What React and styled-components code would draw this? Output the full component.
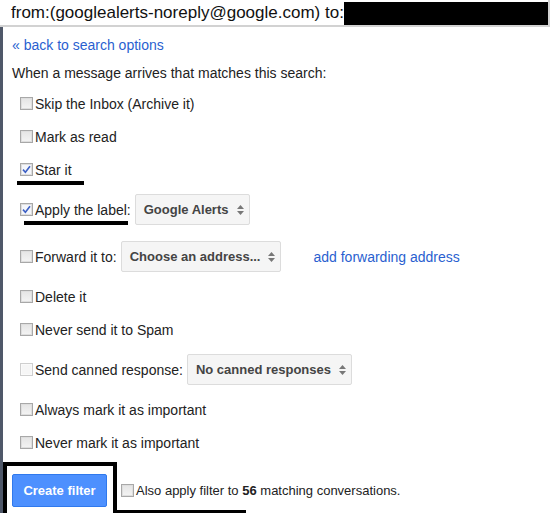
import React from 'react';
import styled, { createGlobalStyle } from 'styled-components';

const GlobalStyle = createGlobalStyle`
  html, body {
    margin: 0;
    padding: 0;
    background: #fff;
  }
  body {
    font-family: "Liberation Sans", Arial, sans-serif;
    color: #222;
  }
`;

const Page = styled.div`
  position: relative;
  width: 550px;
  height: 513px;
  overflow: hidden;
  background: #fff;
`;

const Header = styled.div`
  display: flex;
  align-items: stretch;
  height: 25px;
  box-sizing: content-box;
  border-bottom: 2px solid #d2d2d2;
  border-right: 2px solid #d2d2d2;
  padding-left: 11px;
`;

const Query = styled.div`
  font-size: 17px;
  line-height: 25px;
  color: #111;
  white-space: nowrap;
`;

const Redacted = styled.div`
  flex: 1;
  margin-top: 2px;
  background: #000;
`;

const Body = styled.div`
  border-left: 3px solid #4f5869;
  padding: 4px 0 0 9px;
  height: 486px;
  box-sizing: border-box;
`;

const Line = styled.div`
  display: flex;
  align-items: center;
  height: ${(p) => p.$h || 28}px;
  font-size: ${(p) => p.$size || 14}px;
`;

const Link = styled.a`
  color: #2a5fd0;
  text-decoration: none;
  font-size: 14px;
  margin-left: ${(p) => p.$ml || 0}px;
  cursor: pointer;
`;

const Row = styled.div`
  display: flex;
  align-items: center;
  height: ${(p) => (p.$tall ? 47 : 33)}px;
  padding-left: 8px;
  font-size: 14px;
  white-space: nowrap;
`;

const Box = styled.span`
  display: inline-flex;
  align-items: center;
  justify-content: center;
  width: 13px;
  height: 13px;
  box-sizing: border-box;
  border: 1px solid ${(p) => (p.$disabled ? '#cfcfcf' : '#a8a8a8')};
  background: ${(p) =>
    p.$checked
      ? '#f4f6fb'
      : p.$disabled
      ? '#f6f6f6'
      : 'linear-gradient(#e4e4e4, #f4f4f4)'};
  box-shadow: inset 0 0 0 1px ${(p) => (p.$disabled ? '#fafafa' : '#dedede')};
  margin-right: 2px;
  margin-left: ${(p) => p.$ml || 0}px;
  flex-shrink: 0;
`;

const Select = styled.div`
  position: relative;
  display: inline-flex;
  align-items: center;
  height: 31px;
  box-sizing: border-box;
  margin-left: 4px;
  padding: 0 20px 0 8px;
  border: 1px solid #dcdcdc;
  border-radius: 2px;
  background: #f5f5f5;
  color: #444;
  font-size: 13px;
  font-weight: bold;
`;

const Arrows = styled.svg`
  position: absolute;
  right: 5px;
  top: 10px;
`;

const Footer = styled.div`
  display: flex;
  align-items: center;
  padding-top: 15px;
  font-size: 13px;
  white-space: nowrap;
`;

const Button = styled.button`
  width: 95px;
  height: 33px;
  border: 1px solid #3079ed;
  border-radius: 2px;
  background: #4d90fe;
  color: #fff;
  font-family: "Liberation Sans", Arial, sans-serif;
  font-size: 13px;
  font-weight: bold;
  padding: 0;
  margin-right: 14px;
`;

const Mark = styled.div`
  position: absolute;
  left: ${(p) => p.$x}px;
  top: ${(p) => p.$y}px;
  width: ${(p) => p.$w}px;
  height: ${(p) => p.$h}px;
  background: #000;
`;

const Frame = styled.div`
  position: absolute;
  left: 3px;
  top: 462px;
  width: 114px;
  height: 70px;
  box-sizing: border-box;
  border: 4px solid #000;
`;

const Check = ({ checked, disabled, ml }) => (
  <Box $checked={checked} $disabled={disabled} $ml={ml}>
    {checked && (
      <svg width="9" height="9" viewBox="0 0 9 9">
        <path d="M1 4.6 L3.4 7.2 L8 1.2" fill="none" stroke="#3c5fc4" strokeWidth="1.6" />
      </svg>
    )}
  </Box>
);

const Dropdown = ({ children }) => (
  <Select>
    {children}
    <Arrows width="7" height="10" viewBox="0 0 7 10">
      <path d="M3.5 0 L7 4 L0 4 Z" fill="#777" />
      <path d="M0 6 L7 6 L3.5 10 Z" fill="#777" />
    </Arrows>
  </Select>
);

export default function App() {
  return (
    <Page>
      <GlobalStyle />
      <Header>
        <Query>from:(googlealerts-noreply@google.com) to:</Query>
        <Redacted />
      </Header>
      <Body>
        <Line>
          <Link>« back to search options</Link>
        </Line>
        <Line>When a message arrives that matches this search:</Line>

        <Row><Check />Skip the Inbox (Archive it)</Row>
        <Row><Check />Mark as read</Row>
        <Row><Check checked />Star it</Row>
        <Row $tall>
          <Check checked />Apply the label:
          <Dropdown>Google Alerts</Dropdown>
        </Row>
        <Row $tall>
          <Check />Forward it to:
          <Dropdown>Choose an address...</Dropdown>
          <Link $ml={32}>add forwarding address</Link>
        </Row>
        <Row><Check />Delete it</Row>
        <Row><Check />Never send it to Spam</Row>
        <Row $tall>
          <Check disabled />Send canned response:
          <Dropdown>No canned responses</Dropdown>
        </Row>
        <Row><Check />Always mark it as important</Row>
        <Row><Check />Never mark it as important</Row>

        <Footer>
          <Button>Create filter</Button>
          <Check />
          <span>
            Also apply filter to <b>56</b> matching conversations.
          </span>
        </Footer>
      </Body>

      <Mark $x={17} $y={181} $w={67} $h={4} />
      <Mark $x={24} $y={221} $w={104} $h={4} />
      <Frame />
      <Mark $x={115} $y={510} $w={131} $h={3} />
    </Page>
  );
}
